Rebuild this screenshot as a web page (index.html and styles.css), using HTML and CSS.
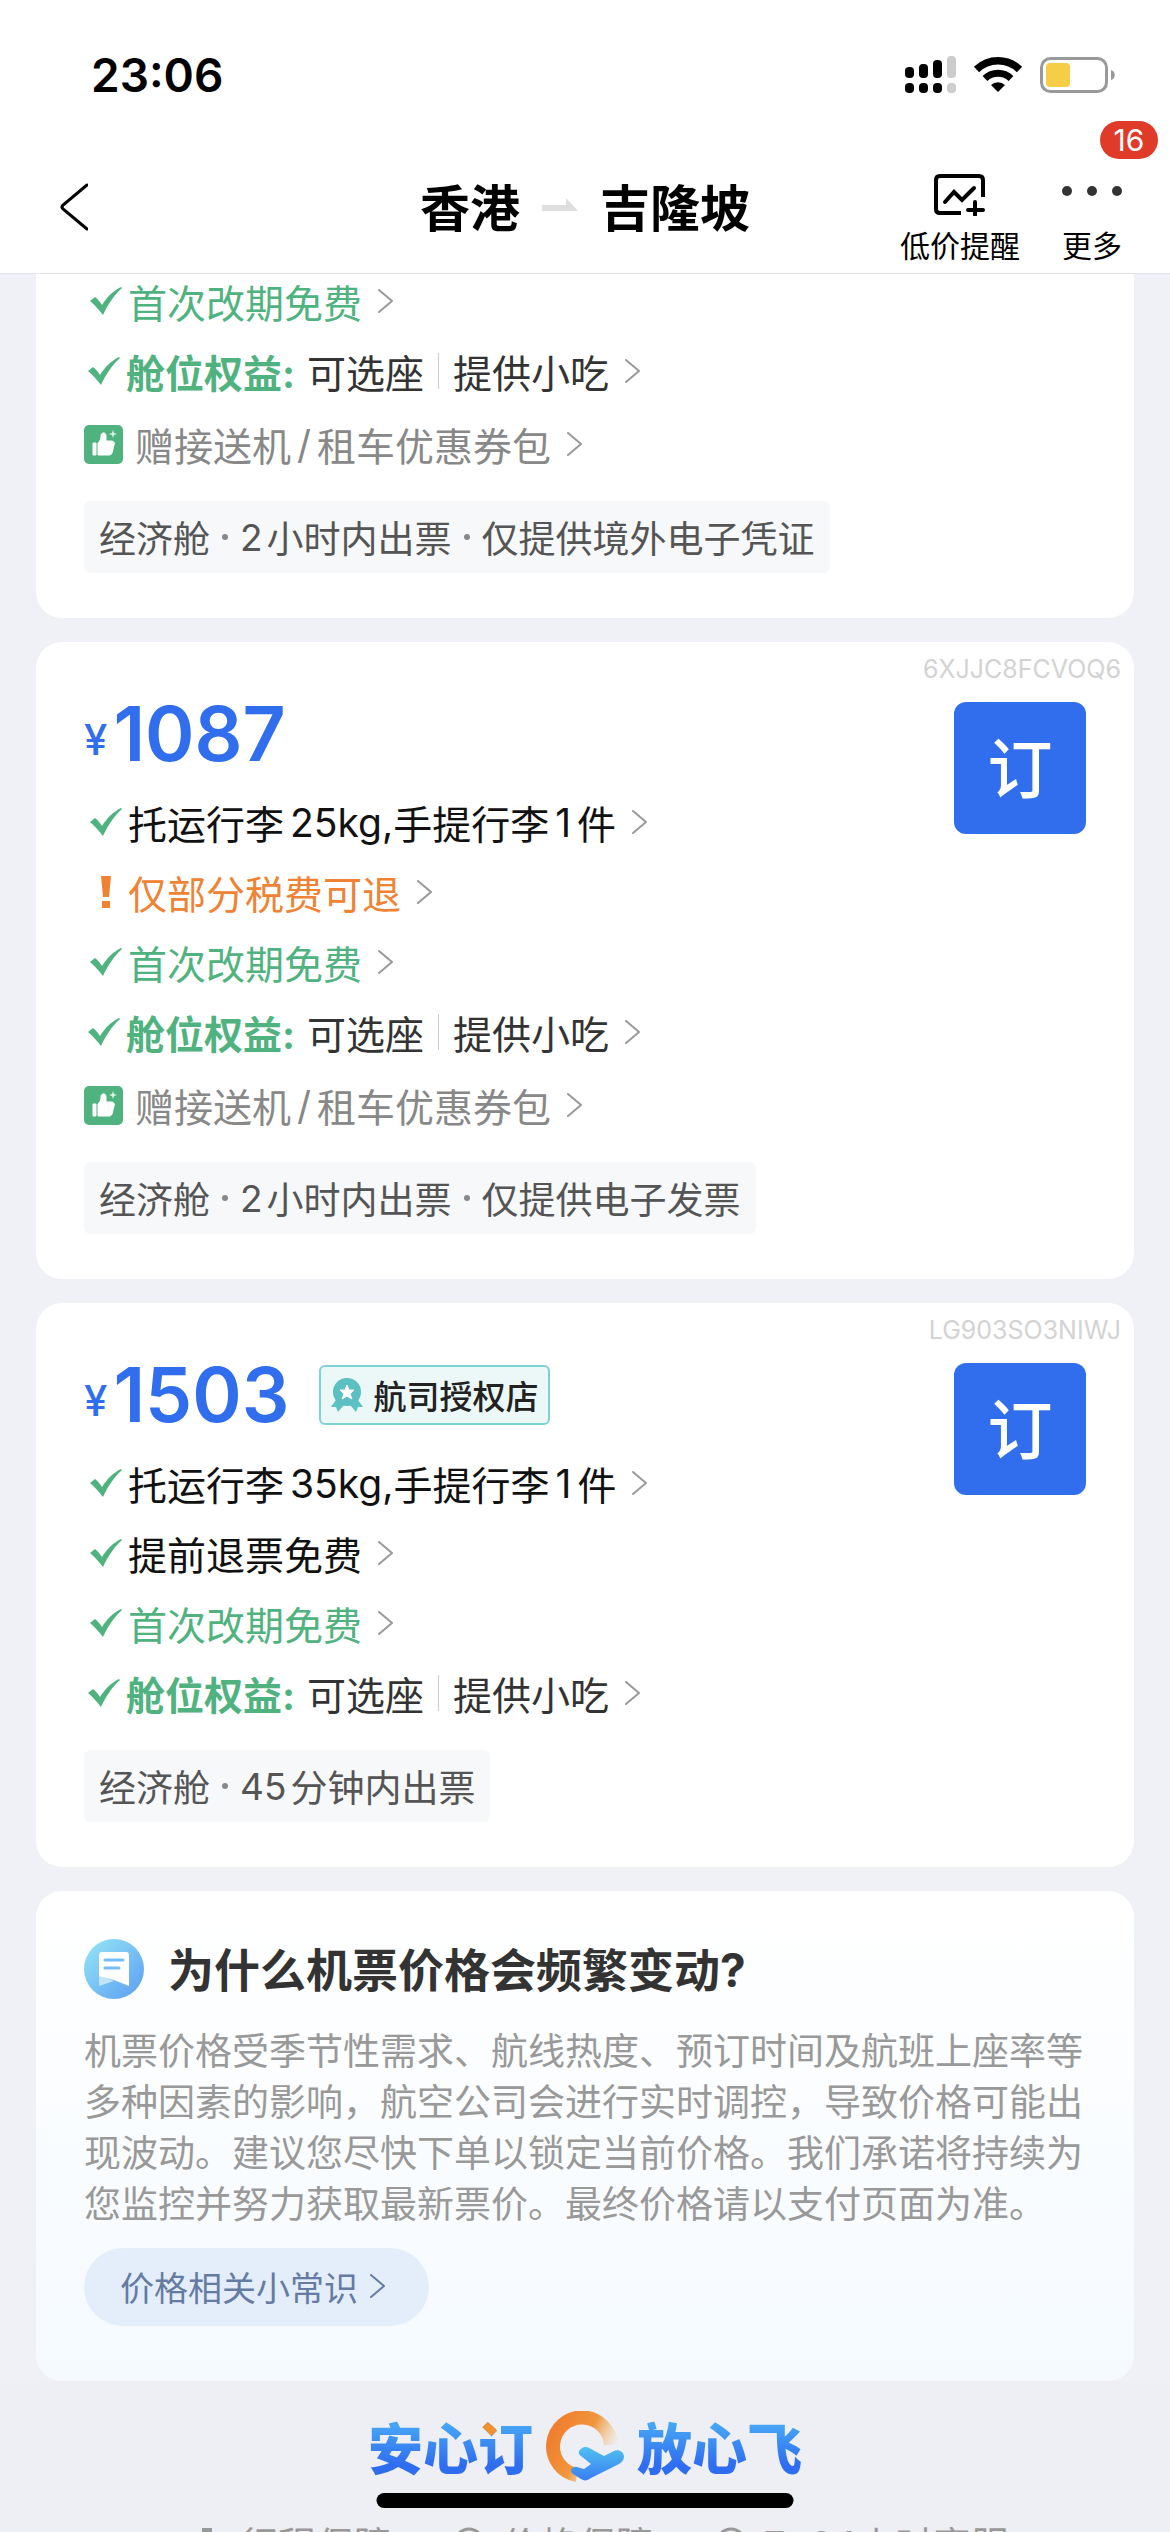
FILE: index.html
```html
<!DOCTYPE html>
<html lang="zh-CN">
<head>
    <meta charset="utf-8">
    <meta name="viewport" content="width=device-width, initial-scale=1">
    <title>香港 - 吉隆坡</title>
    <link rel="stylesheet" href="styles.css">
</head>
<body>
    <!-- shared icons -->
    <svg class="defs" width="0" height="0">
        <symbol id="check" viewBox="0 0 32 28">
            <path d="M0 14 L5 10 C8 12 10 15 12 18 C17 10 23 4 31 0 L32 1 C25 7 18 17 13 28 C9 23 5 18 0 14 Z" fill="#50b37f"/>
        </symbol>
        <symbol id="arrow" viewBox="0 0 16 24">
            <path d="M1 1 L14 12 L1 23" fill="none" stroke="currentColor" stroke-width="2" stroke-linejoin="round" stroke-linecap="round"/>
        </symbol>
        <symbol id="warn" viewBox="0 0 12 32">
            <path d="M1 0 H11 L9 21 H3 Z M2 25 H10 V32 H2 Z" fill="#f08233"/>
        </symbol>
        <symbol id="thumb" viewBox="0 0 39 39">
            <rect width="39" height="39" rx="5" fill="#50b37f"/>
            <path d="M9 18 h3 v12 h-3 z M14 18 C17 15 17 13 17 10 C18 7 22 7 22 11 L22 16 H27 C30 16 31 18 30 20 L28 28 C27 30 26 30 25 30 H14 Z" fill="#fff" stroke="#fff" stroke-linejoin="round"/>
            <path d="M29 5 l1 3 3 1 -3 1 -1 3 -1 -3 -3 -1 3 -1 z" fill="#d8f3e5"/>
        </symbol>
    </svg>

    <header class="header">
        <div class="status">
            <div class="time">23:06</div>
            <div class="status-icons">
                <svg width="51" height="38" viewBox="0 0 51 38">
                    <rect x="0" y="11" width="9" height="11" rx="4"/>
                    <rect x="14" y="8" width="9" height="14" rx="4"/>
                    <rect x="28" y="4" width="9" height="18" rx="4"/>
                    <rect x="42" y="0" width="9" height="22" rx="4" fill="#ccc"/>
                    <rect x="0" y="27" width="9" height="10" rx="4"/>
                    <rect x="14" y="27" width="9" height="10" rx="4"/>
                    <rect x="28" y="27" width="9" height="10" rx="4"/>
                    <rect x="42" y="27" width="9" height="10" rx="4" fill="#ccc"/>
                </svg>
                <svg width="50" height="37" viewBox="0 0 50 37">
                    <path d="M3.500 13.500 A31 31 0 0 1 46.500 13.500" fill="none" stroke="#000" stroke-width="7.500"/>
                    <path d="M12 22.500 A19 19 0 0 1 38 22.500" fill="none" stroke="#000" stroke-width="7"/>
                    <path d="M18 29 A10 10 0 0 1 32 29 L25 36 Z"/>
                </svg>
                <svg width="76" height="36" viewBox="0 0 76 36">
                    <rect x="1.500" y="1.500" width="65" height="33" rx="9" fill="none" stroke="#999" stroke-width="3"/>
                    <rect x="6" y="6" width="24" height="24" rx="4" fill="#f5cd46"/>
                    <path d="M71 13 C76 14 76 22 71 23 Z" fill="#999"/>
                </svg>
            </div>
        </div>
        <nav class="nav">
            <button class="back" aria-label="返回">
                <svg width="28" height="48" viewBox="0 0 28 48"><path d="M27 2 L3 22 Q1 24 3 26 L27 46" fill="none" stroke="#000" stroke-width="3" stroke-linecap="round"/></svg>
            </button>
            <h1 class="route">
                <span>香港</span>
                <svg width="36" height="14" viewBox="0 0 36 14"><path d="M0 7 H24 V0 L36 13 H0 Z" fill="#dededf"/></svg>
                <span>吉隆坡</span>
            </h1>
            <div class="actions">
                <button class="action">
                    <svg width="52" height="42" viewBox="0 0 52 42" fill="none" stroke="#000" stroke-width="4">
                        <path d="M27 39 H6 Q2 39 2 35 V6 Q2 2 6 2 H45 Q49 2 49 6 V23"/>
                        <path d="M11 28 L20 18 L28 26 L40 14" stroke-linecap="round"/>
                        <path d="M34 36 H49 M41 28 V41" stroke-linecap="round"/>
                    </svg>
                    <span>低价提醒</span>
                </button>
                <button class="action">
                    <svg width="60" height="42" viewBox="0 0 60 42" fill="#333">
                        <circle cx="5" cy="17" r="5"/><circle cx="30" cy="17" r="5"/><circle cx="55" cy="17" r="5"/>
                    </svg>
                    <span>更多</span>
                    <b class="count">16</b>
                </button>
            </div>
        </nav>
    </header>

    <main class="list">
        <section class="card first">
            <a class="row green" href="#"><svg class="check"><use href="#check"/></svg>首次改期免费<svg class="arrow"><use href="#arrow"/></svg></a>
            <a class="row perks" href="#"><svg class="check"><use href="#check"/></svg><b>舱位权益:</b><span>可选座</span><i class="line"></i><span>提供小吃</span><svg class="arrow"><use href="#arrow"/></svg></a>
            <a class="row gift" href="#"><svg class="thumb"><use href="#thumb"/></svg>赠接送机<span class="num">/</span>租车优惠券包<svg class="arrow"><use href="#arrow"/></svg></a>
            <div class="tag">经济舱<i class="dot"></i>2<span class="after">小时内出票</span><i class="dot"></i>仅提供境外电子凭证</div>
        </section>

        <section class="card">
            <div class="code">6XJJC8FCVOQ6</div>
            <div class="offer">
                <div class="detail">
                    <div class="price"><small>¥</small><strong>1087</strong></div>
                    <a class="row" href="#"><svg class="check"><use href="#check"/></svg>托运行李<span class="num weight">25kg,</span>手提行李<span class="num">1</span>件<svg class="arrow"><use href="#arrow"/></svg></a>
                    <a class="row orange" href="#"><svg class="warn"><use href="#warn"/></svg>仅部分税费可退<svg class="arrow"><use href="#arrow"/></svg></a>
                    <a class="row green" href="#"><svg class="check"><use href="#check"/></svg>首次改期免费<svg class="arrow"><use href="#arrow"/></svg></a>
                    <a class="row perks" href="#"><svg class="check"><use href="#check"/></svg><b>舱位权益:</b><span>可选座</span><i class="line"></i><span>提供小吃</span><svg class="arrow"><use href="#arrow"/></svg></a>
                    <a class="row gift" href="#"><svg class="thumb"><use href="#thumb"/></svg>赠接送机<span class="num">/</span>租车优惠券包<svg class="arrow"><use href="#arrow"/></svg></a>
                    <div class="tag">经济舱<i class="dot"></i>2<span class="after">小时内出票</span><i class="dot"></i>仅提供电子发票</div>
                </div>
                <button class="book">订</button>
            </div>
        </section>

        <section class="card">
            <div class="code">LG903SO3NIWJ</div>
            <div class="offer">
                <div class="detail">
                    <div class="price">
                        <small>¥</small><strong>1503</strong>
                        <span class="shop">
                            <svg width="32" height="36" viewBox="0 0 32 36">
                                <path d="M5 23 L0 30 L5 30 L7 35 L13 28 Z M27 23 L32 30 L27 30 L25 35 L19 28 Z" fill="#5cc3c3"/>
                                <circle cx="16" cy="15" r="14" fill="#5cbfc2"/>
                                <path d="M16 8 L18 13 L23 13 L19 17 L21 22 L16 19 L11 22 L13 17 L9 13 L14 13 Z" fill="#fff" stroke="#fff" stroke-linejoin="round"/>
                            </svg>
                            航司授权店
                        </span>
                    </div>
                    <a class="row" href="#"><svg class="check"><use href="#check"/></svg>托运行李<span class="num weight">35kg,</span>手提行李<span class="num">1</span>件<svg class="arrow"><use href="#arrow"/></svg></a>
                    <a class="row" href="#"><svg class="check"><use href="#check"/></svg>提前退票免费<svg class="arrow"><use href="#arrow"/></svg></a>
                    <a class="row green" href="#"><svg class="check"><use href="#check"/></svg>首次改期免费<svg class="arrow"><use href="#arrow"/></svg></a>
                    <a class="row perks" href="#"><svg class="check"><use href="#check"/></svg><b>舱位权益:</b><span>可选座</span><i class="line"></i><span>提供小吃</span><svg class="arrow"><use href="#arrow"/></svg></a>
                    <div class="tag">经济舱<i class="dot"></i>45<span class="after">分钟内出票</span></div>
                </div>
                <button class="book">订</button>
            </div>
        </section>

        <section class="card info">
            <h2>
                <svg width="60" height="60" viewBox="0 0 60 60">
                    <defs>
                        <linearGradient id="blue" x1="0" y1="0" x2="1" y2="1">
                            <stop offset="0" stop-color="#96e8f7"/><stop offset="1" stop-color="#5a9cf2"/>
                        </linearGradient>
                    </defs>
                    <circle cx="30" cy="30" r="30" fill="url(#blue)"/>
                    <path d="M15 36 L30 42 L15 47 Z" fill="#bfe4fb"/>
                    <path d="M18 13 H42 Q45 13 45 16 V47 L30 41 L15 37 V16 Q15 13 18 13 Z" fill="#fff"/>
                    <path d="M21 21 H39 M21 29 H35" stroke="#74bdf5" stroke-width="3" stroke-linecap="round"/>
                </svg>
                <span>为什么机票价格会频繁变动?</span>
            </h2>
            <p>机票价格受季节性需求、航线热度、预订时间及航班上座率等多种因素的影响，航空公司会进行实时调控，导致价格可能出现波动。建议您尽快下单以锁定当前价格。我们承诺将持续为您监控并努力获取最新票价。最终价格请以支付页面为准。</p>
            <a class="pill" href="#">价格相关小常识<svg class="arrow"><use href="#arrow"/></svg></a>
        </section>

        <footer class="footer">
            <div class="slogan">
                <span class="left">安心订</span>
                <svg width="78" height="72" viewBox="0 0 78 72">
                    <defs>
                        <linearGradient id="ring" gradientUnits="userSpaceOnUse" x1="10" y1="20" x2="64" y2="48">
                            <stop offset="0" stop-color="#f08030"/><stop offset="0.500" stop-color="#f0963c"/><stop offset="1" stop-color="#f4c27a" stop-opacity="0"/>
                        </linearGradient>
                        <linearGradient id="plane" x1="0" y1="0" x2="0" y2="1">
                            <stop offset="0" stop-color="#4fc0f2"/><stop offset="1" stop-color="#3a7df3"/>
                        </linearGradient>
                    </defs>
                    <path d="M31 64 A29 29 0 1 1 65 34" fill="none" stroke="url(#ring)" stroke-width="14"/>
                    <path d="M35 38 C38 35 42 36 45 38 L58 45 L68 40 C72 38 77 40 78 45 C78 49 76 51 73 53 L45 67 C41 70 38 70 35 68 L27 63 C23 60 26 55 31 56 L38 58 L45 53 L35 45 C32 43 32 40 35 38 Z" fill="url(#plane)"/>
                </svg>
                <span>放心飞</span>
            </div>
            <ul class="promises">
                <li><svg width="32" height="32" viewBox="0 0 32 32"><path d="M11 1 H21 V8 H30 V31 H2 V8 H11 Z" fill="#999"/></svg>行程保障</li>
                <li><svg width="32" height="32" viewBox="0 0 32 32"><circle cx="16" cy="16" r="14" fill="none" stroke="#999" stroke-width="3"/></svg>价格保障</li>
                <li><svg width="32" height="32" viewBox="0 0 32 32"><circle cx="16" cy="16" r="14" fill="none" stroke="#999" stroke-width="3"/></svg>7*24小时客服</li>
            </ul>
        </footer>
    </main>
    <div class="home-bar"></div>
</body>
</html>
```
FILE: styles.css
```css
:root {
    --blue: #306eed;
    --green: #50b37f;
    --orange: #f08233;
    --bg: #eff1f6;
}
* {
    box-sizing: border-box;
}
body {
    margin: 0;
    height: 100vh;
    display: flex;
    flex-direction: column;
    overflow: hidden;
    background-color: var(--bg);
    color: #111;
    font-family: Inter, "Noto Sans CJK SC", sans-serif;
}
button {
    border: 0;
    padding: 0;
    background: none;
    color: inherit;
    font-family: inherit;
}
a {
    color: inherit;
    text-decoration: none;
}
svg {
    flex: none;
}
.defs {
    position: absolute;
}

/* header */
.header {
    flex: none;
    background-color: #fff;
    border-bottom: 1px solid #e2e3e5;
}
.status {
    display: flex;
    justify-content: space-between;
    align-items: center;
    height: 141px;
    padding: 8px 54px 0 91px;
}
.time {
    font-size: 46px;
    font-weight: 600;
    color: #000;
}
.status-icons {
    display: flex;
    align-items: center;
    gap: 17px;
}
.nav {
    display: grid;
    grid-template-columns: 1fr auto 1fr;
    align-items: center;
    height: 132px;
    padding: 0 48px;
}
.back {
    justify-self: start;
    margin-left: 12px;
    line-height: 0;
}
.route {
    display: flex;
    align-items: center;
    gap: 22px;
    margin: 0;
    padding-bottom: 5px;
    font-size: 50px;
    font-weight: 700;
    color: #000;
}
.actions {
    justify-self: end;
    align-self: start;
    display: flex;
    gap: 42px;
    padding-top: 33px;
}
.action {
    position: relative;
    display: flex;
    flex-direction: column;
    align-items: center;
    gap: 12px;
    font-size: 30px;
    line-height: 36px;
    color: #000;
}
.count {
    position: absolute;
    top: -53px;
    right: -36px;
    width: 58px;
    border-radius: 19px;
    background-color: #e03a28;
    color: #fff;
    font-weight: 400;
    line-height: 38px;
}

/* offers */
.list {
    flex: 1;
    overflow-y: auto;
    scrollbar-width: none;
}
.card {
    margin: 0 36px 24px;
    padding: 0 48px 45px;
    border-radius: 26px;
    background-color: #fff;
}
.first {
    margin-top: -7px;
    border-radius: 0 0 26px 26px;
}
.code {
    margin-right: -35px;
    padding-bottom: 6px;
    text-align: right;
    font-size: 25px;
    line-height: 54px;
    color: #d3d3d3;
}
.offer {
    display: flex;
    justify-content: space-between;
    align-items: flex-start;
}
.price {
    display: flex;
    align-items: flex-end;
    height: 64px;
    margin-bottom: 22px;
    color: var(--blue);
}
.price small {
    font-size: 42px;
    font-weight: 500;
    line-height: 52px;
}
.price strong {
    margin-left: 6px;
    font-size: 75px;
    font-weight: 600;
    line-height: 64px;
}
.shop {
    display: flex;
    align-items: center;
    align-self: center;
    gap: 10px;
    height: 60px;
    margin-left: 30px;
    padding: 0 10px;
    border: 2px solid #7dd3d3;
    border-radius: 6px;
    background-color: #ecf7f7;
    color: #222;
    font-size: 33px;
    font-weight: 500;
}
.row {
    display: flex;
    align-items: center;
    height: 70px;
    padding-bottom: 2px;
    font-size: 39px;
}
.green {
    color: var(--green);
}
.orange {
    color: var(--orange);
}
.check {
    width: 32px;
    height: 28px;
    margin: 0 6px 0 6px;
}
.warn {
    width: 12px;
    height: 32px;
    margin: 0 16px 0 16px;
}
.arrow {
    width: 16px;
    height: 24px;
    margin-left: 16px;
    color: #999;
}
.num {
    margin: 0 6px;
}
.weight {
    margin-right: 0;
}
.perks {
    color: #333;
}
.perks .check {
    margin: 0 6px 0 4px;
}
.perks b {
    margin-right: 12px;
    color: var(--green);
}
.line {
    width: 1px;
    height: 36px;
    margin: 0 14px;
    background-color: #ccc;
}
.gift {
    margin-top: 3px;
    color: #888;
}
.thumb {
    width: 39px;
    height: 39px;
    margin-right: 12px;
}
.tag {
    display: flex;
    align-items: center;
    width: fit-content;
    height: 72px;
    margin-top: 21px;
    padding: 0 15px;
    border-radius: 6px;
    background-color: #f7f8fa;
    color: #555;
    font-size: 37px;
}
.after {
    margin-left: 4px;
}
.dot {
    width: 6px;
    height: 6px;
    margin: 0 12px;
    border-radius: 50%;
    background-color: #888;
}
.book {
    flex: none;
    width: 132px;
    height: 132px;
    padding-bottom: 6px;
    border-radius: 12px;
    background-color: var(--blue);
    color: #fff;
    font-size: 65px;
    font-weight: 500;
}

/* price info */
.info {
    margin-bottom: 0;
    padding: 48px 48px 55px;
    background: linear-gradient(#fff, #f5faff);
}
.info h2 {
    display: flex;
    align-items: center;
    gap: 24px;
    height: 60px;
    margin: 0 0 27px;
    color: #333;
    font-size: 46px;
    font-weight: 700;
}
.info h2 span {
    padding-bottom: 5px;
}
.info p {
    margin: 0 0 18px;
    color: #999;
    font-size: 37px;
    line-height: 51px;
}
.pill {
    display: flex;
    align-items: center;
    width: fit-content;
    height: 78px;
    padding: 0 43px 2px 36px;
    border-radius: 39px;
    background-color: #e4eefb;
    color: #657ba3;
    font-size: 34px;
}
.pill .arrow {
    margin-left: 12px;
    color: #657ba3;
}

/* footer */
.footer {
    padding-top: 28px;
    background-color: #eeeff4;
}
.slogan {
    display: flex;
    justify-content: center;
    align-items: center;
    gap: 13px;
    height: 76px;
}
.slogan span {
    margin-bottom: 4px;
    background: linear-gradient(#46a5f5 25%, #2f6df0 75%);
    background-clip: text;
    -webkit-background-clip: text;
    color: transparent;
    font-size: 55px;
    font-weight: 900;
}
.slogan .left {
    background: radial-gradient(circle at 121px 22px, #f09030 8px, transparent 9px), linear-gradient(#46a5f5 25%, #2f6df0 75%);
    background-clip: text;
    -webkit-background-clip: text;
}
.promises {
    display: flex;
    justify-content: center;
    gap: 61px;
    margin: 0;
    padding: 30px 0 24px 30px;
    list-style: none;
    color: #999;
    font-size: 38px;
}
.promises li {
    display: flex;
    align-items: center;
    gap: 17px;
}
.home-bar {
    position: absolute;
    bottom: 24px;
    left: 50%;
    width: 417px;
    height: 15px;
    border-radius: 8px;
    background-color: #000;
    transform: translateX(-50%);
}
```
